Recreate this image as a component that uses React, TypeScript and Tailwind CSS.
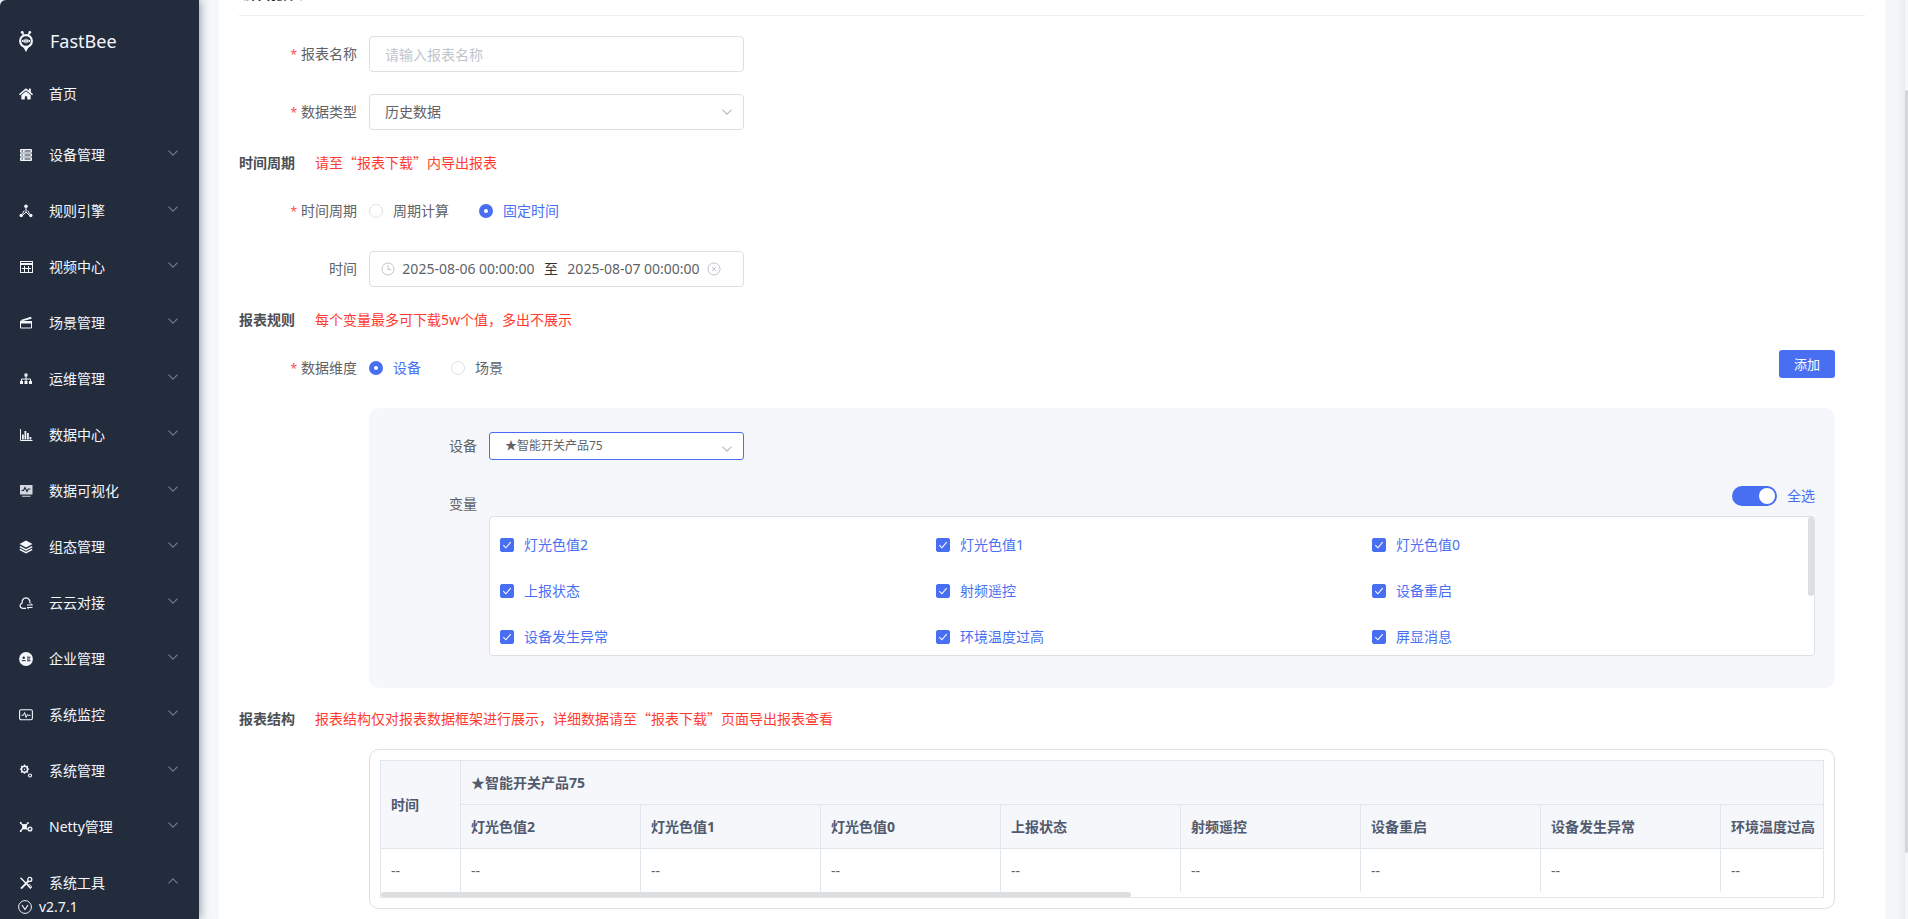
import { useState } from "react";
import type { ReactNode } from "react";
import { FaHome } from "react-icons/fa";

function Glyph({ children, size = "size-[14px]" }: { children: ReactNode; size?: string }) {
  return (
    <svg viewBox="0 0 14 14" className={`${size} shrink-0`} fill="none" stroke="currentColor" aria-hidden="true">
      {children}
    </svg>
  );
}

const icons: Record<string, ReactNode> = {
  device: (
    <Glyph>
      <g fill="currentColor" stroke="none">
        <path fillRule="evenodd" d="M2 1h10q1 0 1 1v2q0 .8-1 .8H2Q1 4.800 1 4V2q0-1 1-1Zm.6 1.300v1.200h1.400V2.300Zm3 .3v.8h6v-.8Z" />
        <path fillRule="evenodd" d="M2 5.200h10q1 0 1 .8v2q0 .8-1 .8H2Q1 8.800 1 8V6q0-.8 1-.8Zm.6 1.200v1.200h1.400V6.400Zm3 .2v.8h6v-.8Z" />
        <path fillRule="evenodd" d="M2 9.200h10q1 0 1 .8v2q0 1-1 1H2q-1 0-1-1v-2q0-.8 1-.8Zm.6 1.200v1.200h1.400v-1.200Zm3 .2v.8h6v-.8Z" />
      </g>
    </Glyph>
  ),
  rule: (
    <Glyph>
      <path d="M7 3v5M7 8l-3 3M7 8l3 3M5.200 6.500 3.500 10M8.800 6.500 10.500 10" strokeWidth="1" />
      <g fill="currentColor" stroke="none">
        <circle cx="7" cy="2.200" r="1.800" />
        <circle cx="2.200" cy="11.500" r="1.700" />
        <circle cx="11.800" cy="11.500" r="1.700" />
      </g>
    </Glyph>
  ),
  video: (
    <Glyph>
      <rect x="1.500" y="1.500" width="12" height="11" strokeWidth="1" />
      <path d="M1 4h13" strokeWidth="2" />
      <path d="M3 8.500h9M5.500 6v6M9.500 6v6" strokeWidth="1" />
    </Glyph>
  ),
  scene: (
    <Glyph>
      <path d="M1.500 6.500h11v5.500h-11z" strokeWidth="1" />
      <path d="M1 7.500V5h12v2.500Z" fill="currentColor" stroke="none" />
      <path d="M1 4.200 12 .8l.7 2L4 5Z" fill="currentColor" stroke="none" />
    </Glyph>
  ),
  ops: (
    <Glyph>
      <path d="M7 4v3M2.500 9.500V7h9v2.500" strokeWidth="1" />
      <g fill="currentColor" stroke="none">
        <rect x="5.500" y="1.500" width="3" height="3" />
        <rect x="1" y="9" width="3" height="3" />
        <rect x="5.500" y="9" width="3" height="3" />
        <rect x="10" y="9" width="3" height="3" />
        <rect x="6.500" y="7" width="1" height="2" />
      </g>
    </Glyph>
  ),
  data: (
    <Glyph>
      <path d="M1.500 1v11.500H13.500" strokeWidth="1" />
      <g fill="currentColor" stroke="none">
        <rect x="3" y="6.500" width="1.800" height="5" />
        <rect x="5.500" y="3" width="1.800" height="8.500" />
        <rect x="8" y="5" width="1.800" height="6.500" />
        <rect x="10.500" y="9" width="1.800" height="2.500" />
      </g>
    </Glyph>
  ),
  visual: (
    <Glyph>
      <rect x="1" y="1" width="12.500" height="9.500" fill="currentColor" stroke="none" opacity=".85" />
      <path d="M2.500 6.500h2l1.500-3 2 4 1.300-2.500h2" stroke="#222c3d" strokeWidth="1.200" />
      <path d="M3 12.300h8.500" strokeWidth="1.200" opacity=".7" />
    </Glyph>
  ),
  layers: (
    <Glyph>
      <path d="M7 .6 13.500 4 7 7.400.5 4Z" fill="currentColor" stroke="none" />
      <path d="M.8 6.600 7 9.900l6.200-3.300M.8 9.400 7 12.700l6.200-3.300" strokeWidth="1.600" />
    </Glyph>
  ),
  cloud: (
    <Glyph>
      <path d="M7 12.300H3.700Q1 12.100 1.100 9.600 1.200 7.800 3 7.200 3 2 7 1.900q4 .1 4 5.300" strokeWidth="1.200" />
      <path d="M8 9h5.500M8 11.500h5.500M11.800 7.600 13.500 9M9.700 12.900 8 11.500" strokeWidth="1" />
    </Glyph>
  ),
  company: (
    <Glyph>
      <circle cx="7" cy="7" r="6.900" fill="currentColor" stroke="none" />
      <circle cx="4.700" cy="5.700" r="1.200" fill="#222c3d" stroke="none" />
      <path d="M2.800 8.600h3.800M8 5.200h3.500M8 7h3M8 8.800h3.500" stroke="#222c3d" strokeWidth="1" />
    </Glyph>
  ),
  monitor: (
    <Glyph>
      <rect x=".6" y="1.800" width="12.800" height="10" rx="1.500" strokeWidth="1.100" />
      <path d="M2.500 7.200h2L5.600 4.500l1.500 5 1.300-3 .7.800H11.500" strokeWidth="1" />
    </Glyph>
  ),
  system: (
    <Glyph>
      <circle cx="5.500" cy="5.200" r="3" strokeWidth="1.500" />
      <path d="M5.500.6v1.600M5.500 8.200v1.600M.9 5.200h1.600M8.500 5.200h1.600M2.200 2l1.200 1.200M7.600 7.300l1.200 1.200M8.800 2 7.600 3.100M3.400 7.300 2.200 8.500" strokeWidth="1.300" />
      <circle cx="11" cy="11.500" r="1.500" strokeWidth="1.200" />
      <circle cx="5.500" cy="5.200" r=".7" fill="currentColor" stroke="none" />
    </Glyph>
  ),
  netty: (
    <Glyph>
      <path d="M1.500 3 8.500 9.500M1.500 11 8.500 3.500" strokeWidth="1.200" />
      <path d="M3.500 4.500h4v4.500h-4z" fill="currentColor" strokeWidth=".8" />
      <circle cx="1.700" cy="2.700" r=".9" fill="currentColor" stroke="none" />
      <circle cx="1.700" cy="11.200" r=".9" fill="currentColor" stroke="none" />
      <circle cx="9" cy="3" r=".9" fill="currentColor" stroke="none" />
      <circle cx="11" cy="9" r="1.900" strokeWidth="1.300" />
      <circle cx="11" cy="9" r=".6" fill="currentColor" stroke="none" />
    </Glyph>
  ),
  tools: (
    <Glyph>
      <path d="M1.500 1.800 12 12.300" strokeWidth="1.400" />
      <path d="M2 12.600 9.500 5" strokeWidth="2" />
      <circle cx="10.800" cy="3.400" r="2" strokeWidth="1.300" />
      <path d="m8.500 9.500 2-1.300 2.300 2.800-1.500 1.700Z" strokeWidth=".8" />
    </Glyph>
  ),
};

const menu = [
  { label: "设备管理", icon: "device" },
  { label: "规则引擎", icon: "rule" },
  { label: "视频中心", icon: "video" },
  { label: "场景管理", icon: "scene" },
  { label: "运维管理", icon: "ops" },
  { label: "数据中心", icon: "data" },
  { label: "数据可视化", icon: "visual" },
  { label: "组态管理", icon: "layers" },
  { label: "云云对接", icon: "cloud" },
  { label: "企业管理", icon: "company" },
  { label: "系统监控", icon: "monitor" },
  { label: "系统管理", icon: "system" },
  { label: "Netty管理", icon: "netty" },
  { label: "系统工具", icon: "tools", open: true },
];

const variables = ["灯光色值2", "灯光色值1", "灯光色值0", "上报状态", "射频遥控", "设备重启", "设备发生异常", "环境温度过高", "屏显消息"];
const columns = variables.slice(0, 8);

function Chevron({ className }: { className: string }) {
  return (
    <svg viewBox="0 0 12 12" className={className} fill="none" stroke="currentColor" strokeWidth="1.100" aria-hidden="true">
      <path d="m1.500 3.700 4.500 4.500 4.500-4.500" />
    </svg>
  );
}

function Sidebar() {
  return (
    <aside className="relative z-10 flex h-full w-[199px] shrink-0 flex-col overflow-hidden rounded-tl-md bg-[#222c3d] text-[#f4f6fb] shadow-[2px_0_8px_rgba(0,21,41,0.35)]">
      <div className="flex h-[66px] shrink-0 items-center gap-[17px] pt-4 pl-[19px]">
        <svg viewBox="0 0 14 21" className="h-[21px] w-[14px] shrink-0" fill="none" stroke="currentColor" aria-hidden="true">
          <circle cx="7" cy="10" r="5.900" strokeWidth="2.100" />
          <path d="M4.800 4.500 3.300 1.200M9.200 4.500 10.700 1.200" strokeWidth="1.500" />
          <circle cx="3.200" cy="1.400" r="1.400" fill="currentColor" stroke="none" />
          <circle cx="10.800" cy="1.400" r="1.400" fill="currentColor" stroke="none" />
          <path d="M4 15.500h6L7 20.900Z" fill="currentColor" stroke="none" />
          <path d="M3.500 9v2M5.200 8.300v3.400M7 7.600v4.800M8.800 8.300v3.400M10.500 9v2M3.500 10h7" strokeWidth="1.100" />
        </svg>
        <span className="text-lg leading-6">FastBee</span>
      </div>
      <nav className="min-h-0 flex-1 overflow-hidden text-sm">
        <a href="#home" className="mb-[5px] flex h-14 items-center gap-4 pl-[19px]">
          <FaHome className="size-[14px] shrink-0" />
          首页
        </a>
        {menu.map((item) => (
          <a key={item.label} href={`#${item.icon}`} className="flex h-14 items-center pr-5 pl-[19px]">
            {icons[item.icon]}
            <span className="ml-4 flex-1">{item.label}</span>
            <Chevron className={item.open ? "mb-1 size-3 rotate-180 text-[#757d8b]" : "mb-1 size-3 text-[#757d8b]"} />
          </a>
        ))}
      </nav>
      <div className="absolute inset-x-0 bottom-0 flex h-[25px] items-center gap-[7px] bg-[#222c3d] pl-[18px] text-sm">
        <Glyph>
          <circle cx="7" cy="7" r="6.400" strokeWidth="1" />
          <path d="m4 5 3 4.500L10 5" strokeWidth="1.200" />
        </Glyph>
        v2.7.1
      </div>
    </aside>
  );
}

function Row({ label, htmlFor, required, children }: { label: string; htmlFor?: string; required?: boolean; children: ReactNode }) {
  return (
    <div className="mb-[22px] flex">
      <label htmlFor={htmlFor} className="w-[130px] shrink-0 pr-3 text-right leading-9">
        {required && <span className="mr-1 text-xs text-[#ff4d4f]">*</span>}
        {label}
      </label>
      {children}
    </div>
  );
}

function Section({ title, note }: { title: string; note: string }) {
  return (
    <div className="mb-[19px] flex gap-5 leading-[22px]">
      <h2 className="font-bold text-[#4d4f53]">{title}</h2>
      <p className="text-[#ff3b30]">
        {note.split(/([“”])/).map((part, i) =>
          part === "“" || part === "”" ? (
            <span key={i} className="font-['Noto_Sans_CJK_SC',sans-serif] leading-none">{part}</span>
          ) : (
            part
          ),
        )}
      </p>
    </div>
  );
}

function Radio({ name, label, defaultChecked }: { name: string; label: string; defaultChecked?: boolean }) {
  return (
    <label className="flex h-9 items-center gap-[10px] has-checked:text-[#486ff2]">
      <input
        type="radio"
        name={name}
        defaultChecked={defaultChecked}
        className="size-[14px] appearance-none rounded-full border border-[#dcdfe6] bg-white checked:border-[5px] checked:border-[#486ff2]"
      />
      {label}
    </label>
  );
}

function Variable({ label, checked, onChange }: { label: string; checked: boolean; onChange: () => void }) {
  return (
    <label className="flex h-[46px] items-center gap-[10px] text-[#486ff2]">
      <span className="relative flex size-[14px]">
        <input
          type="checkbox"
          checked={checked}
          onChange={onChange}
          className="size-[14px] appearance-none rounded-xs border border-[#dcdfe6] bg-white checked:border-[#486ff2] checked:bg-[#486ff2]"
        />
        <svg viewBox="0 0 14 14" className="pointer-events-none absolute inset-0 size-[14px]" fill="none" stroke="#fff" strokeWidth="1.100" aria-hidden="true">
          <path d="m3.300 7.200 2.600 2.600 4.800-5.600" />
        </svg>
      </span>
      {label}
    </label>
  );
}

const headCell = "border-r border-b border-[#dfe6ec] bg-[#f5f7fa] px-[10px] text-left font-bold text-[#515a6e]";

export default function App() {
  const [selected, setSelected] = useState<string[]>(variables);
  const all = selected.length === variables.length;
  const toggle = (name: string) =>
    setSelected((list) => (list.includes(name) ? list.filter((v) => v !== name) : [...list, name]));

  return (
    <div lang="zh-CN" className="flex h-screen overflow-hidden bg-[#f5f7fb] font-['Noto_Sans','Noto_Sans_CJK_SC',sans-serif] text-sm text-[#606266]">
      <Sidebar />
      <main className="min-w-0 flex-1 overflow-hidden px-5 shadow-[inset_-8px_0_8px_-6px_rgba(0,21,41,0.08)]">
        <div className="-mt-[26px] min-h-[calc(100vh+26px)] bg-white px-5 pt-[6px]">
          <h1 className="mb-5 h-9 border-b border-[#ebeef5] text-base leading-[26px] font-bold text-[#303133]">编辑报表</h1>
          <form onSubmit={(e) => e.preventDefault()}>
            <Row label="报表名称" htmlFor="name" required>
              <input
                id="name"
                type="text"
                placeholder="请输入报表名称"
                className="h-9 w-[375px] rounded-sm border border-[#dcdfe6] px-[15px] placeholder:text-[#c0c4cc]"
              />
            </Row>
            <Row label="数据类型" htmlFor="type" required>
              <div className="relative">
                <select id="type" className="h-9 w-[375px] appearance-none rounded-sm border border-[#dcdfe6] bg-white px-[15px]">
                  <option>历史数据</option>
                </select>
                <Chevron className="pointer-events-none absolute top-3 right-[11px] size-3 text-[#b4b9c3]" />
              </div>
            </Row>

            <Section title="时间周期" note="请至“报表下载”内导出报表" />
            <Row label="时间周期" required>
              <div className="flex gap-[30px]">
                <Radio name="period" label="周期计算" />
                <Radio name="period" label="固定时间" defaultChecked />
              </div>
            </Row>
            <Row label="时间" htmlFor="start">
              <div className="flex h-9 w-[375px] items-center rounded-sm border border-[#dcdfe6] pl-[11px]">
                <svg viewBox="0 0 14 14" className="size-[14px] shrink-0 text-[#c0c4cc]" fill="none" stroke="currentColor" aria-hidden="true">
                  <circle cx="7" cy="7" r="6" />
                  <path d="M7 3.200V7.500h3" />
                </svg>
                <input id="start" type="text" defaultValue="2025-08-06 00:00:00" className="w-[147px] bg-transparent text-center" />
                <span className="w-[18px] text-center text-[#303133]">至</span>
                <input type="text" aria-label="结束时间" defaultValue="2025-08-07 00:00:00" className="w-[147px] bg-transparent text-center" />
                <button type="button" aria-label="清空" className="text-[#c0c4cc]">
                  <Glyph>
                    <circle cx="7" cy="7" r="6" />
                    <path d="m5 5 4 4M9 5 5 9" />
                  </Glyph>
                </button>
              </div>
            </Row>

            <Section title="报表规则" note="每个变量最多可下载5w个值，多出不展示" />
            <Row label="数据维度" required>
              <div className="flex flex-1 items-start justify-between pr-[30px]">
                <div className="flex gap-[30px]">
                  <Radio name="dimension" label="设备" defaultChecked />
                  <Radio name="dimension" label="场景" />
                </div>
                <button type="button" className="h-7 rounded-[3px] bg-[#486ff2] px-[15px] text-[13px] text-white">
                  添加
                </button>
              </div>
            </Row>

            <div className="mr-[30px] mb-5 ml-[130px] rounded-[10px] bg-[#f5f7fb] pt-6 pr-5 pb-8">
              <div className="mb-[26px] flex">
                <label htmlFor="device" className="w-[120px] shrink-0 pr-3 text-right leading-7">设备</label>
                <div className="relative">
                  <select id="device" className="h-7 w-[255px] appearance-none rounded-[3px] border border-[#486ff2] bg-white px-[15px] text-xs">
                    <option>★智能开关产品75</option>
                  </select>
                  <Chevron className="pointer-events-none absolute right-[11px] bottom-[5px] size-3 text-[#b4b9c3]" />
                </div>
              </div>
              <div className="flex">
                <span className="w-[120px] shrink-0 pr-3 text-right leading-9">变量</span>
                <div className="min-w-0 flex-1">
                  <div className="mb-[10px] flex h-5 items-center justify-end gap-[10px] text-[#486ff2]">
                    <input
                      id="all"
                      type="checkbox"
                      role="switch"
                      checked={all}
                      onChange={() => setSelected(all ? [] : variables)}
                      className="h-5 w-[45px] appearance-none rounded-full bg-[#dcdfe6] p-[2px] before:block before:size-4 before:rounded-full before:bg-white checked:bg-[#486ff2] checked:before:ml-auto"
                    />
                    <label htmlFor="all">全选</label>
                  </div>
                  <div className="flex h-[140px] rounded-sm border border-[#dcdfe6] bg-white">
                    <div className="grid flex-1 grid-cols-3 content-start pt-[5px] pl-[10px]">
                      {variables.map((name) => (
                        <Variable key={name} label={name} checked={selected.includes(name)} onChange={() => toggle(name)} />
                      ))}
                    </div>
                    <div className="h-[79px] w-[6px] rounded-full bg-[#dddee0]" />
                  </div>
                </div>
              </div>
            </div>

            <Section title="报表结构" note="报表结构仅对报表数据框架进行展示，详细数据请至“报表下载”页面导出报表查看" />
            <div className="mr-[30px] ml-[130px] rounded-[10px] border border-[#dcdfe6] p-[10px]">
              <div className="overflow-hidden border border-[#dfe6ec]">
                <table className="w-[1520px] table-fixed border-separate border-spacing-0">
                  <colgroup>
                    <col className="w-[80px]" />
                    {columns.map((name) => (
                      <col key={name} className="w-[180px]" />
                    ))}
                  </colgroup>
                  <thead>
                    <tr className="h-11">
                      <th rowSpan={2} className={headCell}>时间</th>
                      <th colSpan={columns.length} className={headCell}>★智能开关产品75</th>
                    </tr>
                    <tr className="h-11">
                      {columns.map((name) => (
                        <th key={name} className={headCell}>{name}</th>
                      ))}
                    </tr>
                  </thead>
                  <tbody>
                    <tr className="h-[43px]">
                      <td className="border-r border-[#dfe6ec] px-[10px]">--</td>
                      {columns.map((name) => (
                        <td key={name} className="border-r border-[#dfe6ec] px-[10px]">--</td>
                      ))}
                    </tr>
                  </tbody>
                </table>
                <div className="h-[5px] w-[52%] rounded-full bg-[#dddee0]" />
              </div>
            </div>
          </form>
        </div>
      </main>
      <div className="w-[3px] shrink-0 pt-[90px]">
        <div className="h-[92%] rounded-full bg-[#d4d5db]" />
      </div>
    </div>
  );
}
